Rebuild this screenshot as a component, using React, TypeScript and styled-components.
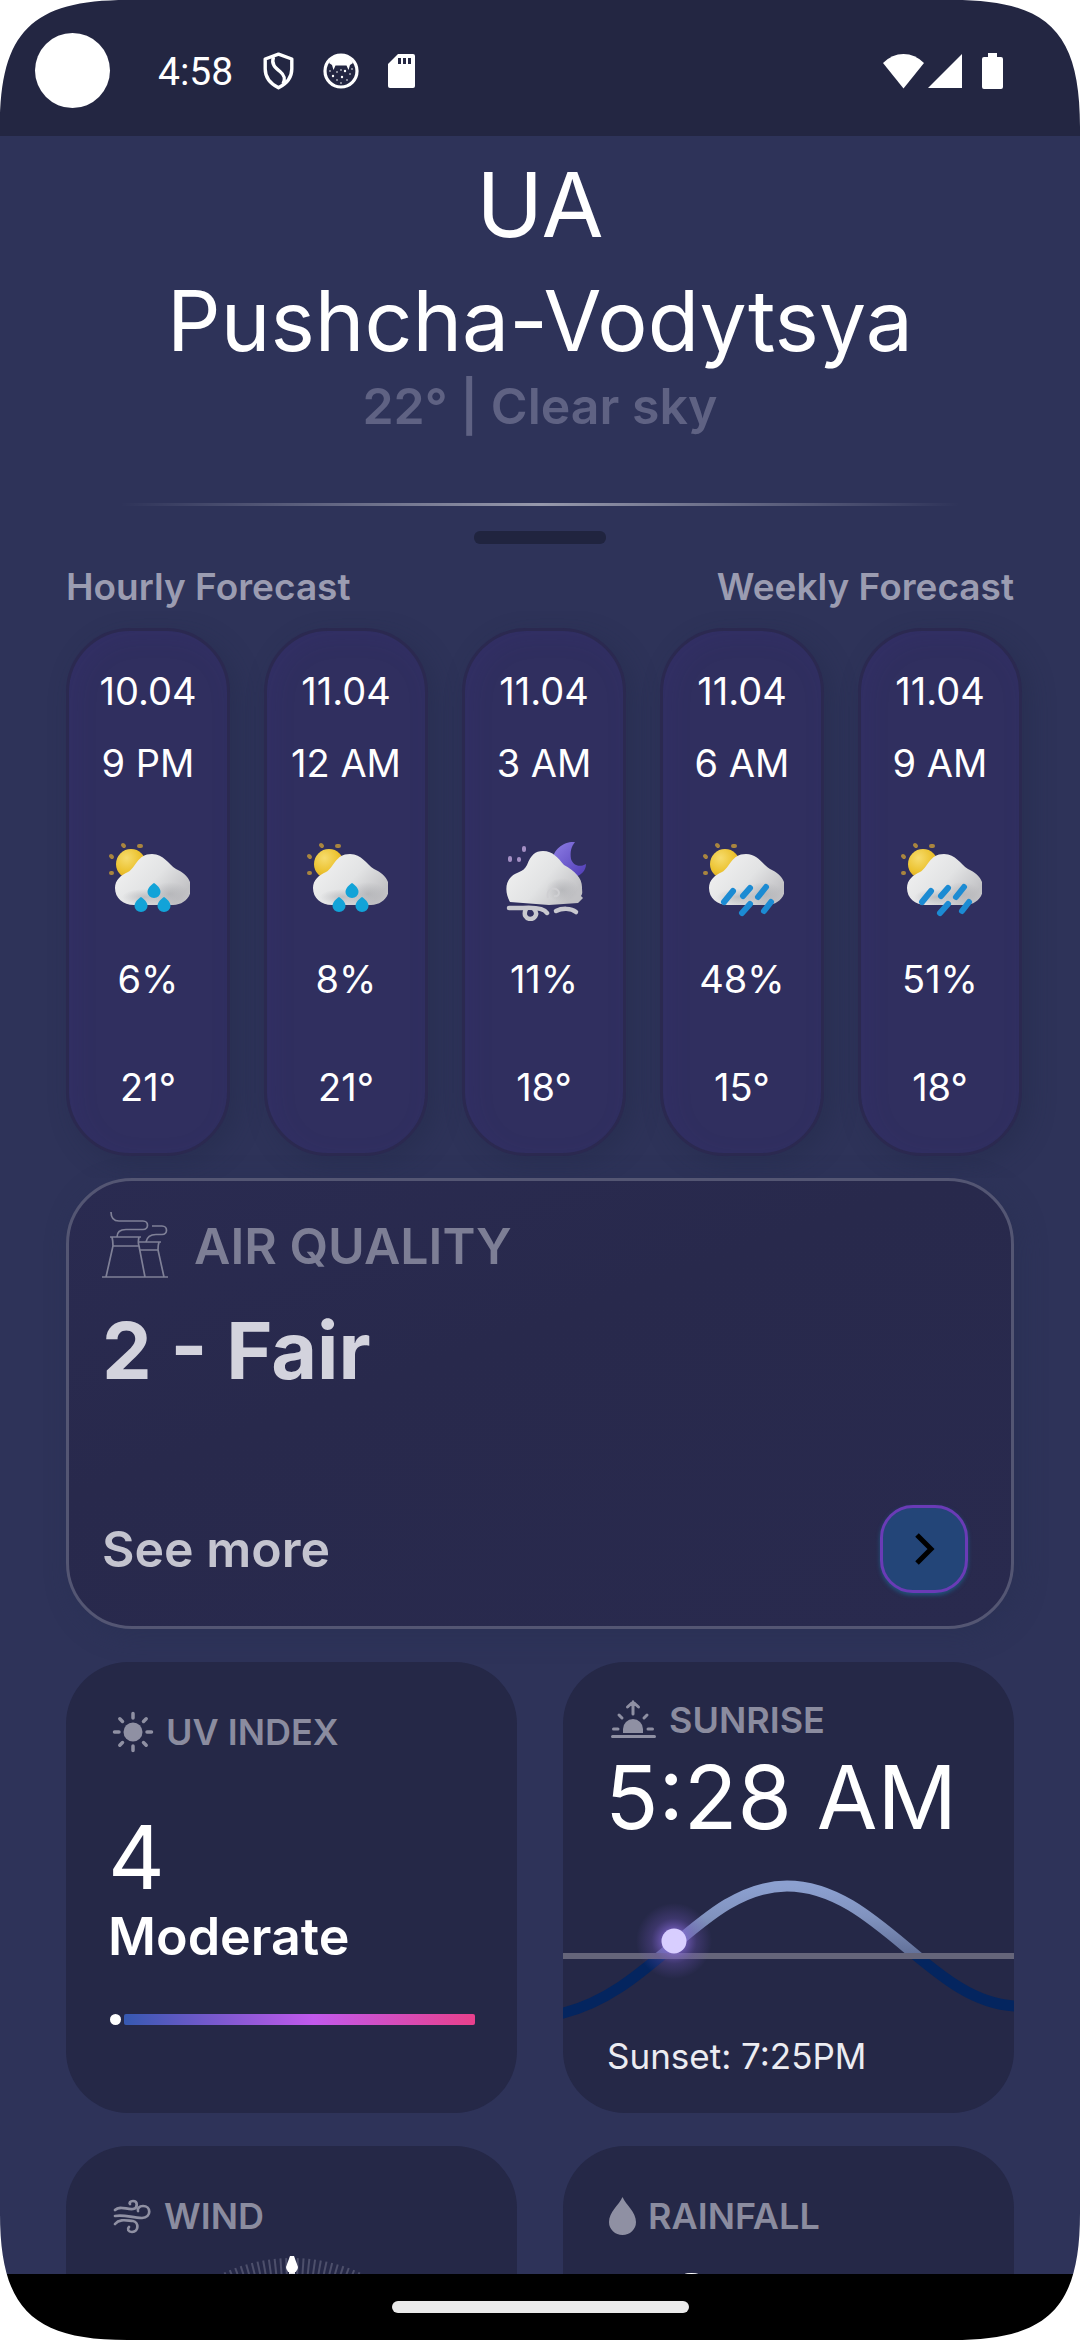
import React from "react";
import styled, { createGlobalStyle } from "styled-components";

const GlobalStyle = createGlobalStyle`
  *, *::before, *::after { box-sizing: border-box; }
  body { margin: 0; background: #fff; }
  button { font: inherit; }
`;

const Screen = styled.div`
  position: relative;
  display: flex;
  flex-direction: column;
  height: 100vh;
  overflow: hidden;
  background: #2e3359;
  color: #fff;
  font-family: Inter, "Liberation Sans", sans-serif;
`;

/* Rounded display corners */
const CornerShape = styled.svg<{ $turn: number; $v: string; $h: string }>`
  position: absolute;
  ${(p) => p.$v}: 0;
  ${(p) => p.$h}: 0;
  width: 127px;
  height: 127px;
  transform: rotate(${(p) => p.$turn}deg);
`;

/* Status bar */
const StatusBar = styled.header`
  display: flex;
  align-items: center;
  flex: none;
  height: 136px;
  padding: 5px 77px 0 35px;
  background: #232642;
`;
const Camera = styled.span`
  width: 75px;
  height: 75px;
  border-radius: 50%;
  background: #fff;
`;
const Clock = styled.time`
  margin: 0 30px 0 48px;
  padding-top: 2px;
  font: 400 39px/48px Roboto, sans-serif;
`;
const StatusIcons = styled.div<{ $gap: number }>`
  display: flex;
  align-items: center;
  gap: ${(p) => p.$gap}px;
`;
const SystemIcons = styled(StatusIcons)`
  margin-left: auto;
`;

/* Scrolling content */
const Content = styled.main`
  flex: 1;
  min-height: 0;
  overflow-y: auto;
  scrollbar-width: none;
  padding-top: 11px;
`;
const Place = styled.section`
  text-align: center;
`;
const Country = styled.p`
  margin: 0;
  font-size: 90px;
  line-height: 116px;
`;
const PlaceName = styled.h1`
  margin: 0;
  font-size: 84px;
  font-weight: 400;
  line-height: 116px;
`;
const PlaceSummary = styled.p`
  margin: 0;
  font-size: 50px;
  font-weight: 600;
  line-height: 54px;
  color: #5f6283;
`;
const Divider = styled.hr`
  height: 3px;
  margin: 70px 120px 25px;
  border: 0;
  background: linear-gradient(90deg, rgba(255, 255, 255, 0), rgba(255, 255, 255, 0.5), rgba(255, 255, 255, 0));
`;
const Handle = styled.div`
  width: 132px;
  height: 13px;
  margin: 0 auto 19px;
  border-radius: 6px;
  background: #20243f;
`;
const Tabs = styled.nav`
  display: flex;
  justify-content: space-between;
  padding: 0 66px;
`;
const Tab = styled.button`
  padding: 0;
  border: 0;
  background: none;
  color: #9b9cb1;
  font-size: 37px;
  font-weight: 600;
  line-height: 48px;
`;

const HourList = styled.ul`
  display: flex;
  gap: 34px;
  margin: 0;
  padding: 17px 66px 22px;
  list-style: none;
  overflow: hidden;
`;
const HourCard = styled.li`
  display: flex;
  flex: none;
  flex-direction: column;
  align-items: center;
  width: 164px;
  padding: 36px 0 42px;
  border: 3px solid #2b2950;
  border-radius: 64px;
  background: #302f5f;
  box-shadow: 8px 8px 24px rgba(32, 40, 70, 0.35), inset 6px 6px 24px rgba(72, 49, 157, 0.1);
`;
const HourText = styled.span<{ $after?: number }>`
  margin-bottom: ${(p) => p.$after ?? 0}px;
  font-size: 38px;
  line-height: 48px;
`;
const WeatherIcon = styled.svg`
  display: block;
  width: 84px;
  height: 84px;
  margin: 26px 0 34px;
`;

/* Air quality */
const Stack = styled.div`
  display: flex;
  flex-direction: column;
  gap: 33px;
  padding: 0 66px;
`;
const AirCard = styled.section`
  display: flex;
  flex-direction: column;
  min-height: 451px;
  padding: 32px 43px 33px 33px;
  border: 3px solid #545673;
  border-radius: 66px;
  background: linear-gradient(160deg, #2a2b51, #28294c 40%, #292a4e);
  box-shadow: 6px 6px 24px rgba(40, 48, 82, 0.5);
`;
const AirHead = styled.div`
  display: flex;
  align-items: center;
  gap: 26px;
  height: 65px;
`;
const AirTitle = styled.h2`
  margin: 0;
  font-size: 50px;
  font-weight: 600;
  line-height: 64px;
  color: #7d7e95;
`;
const AirValue = styled.p`
  margin: 26px 0 auto;
  font-size: 79px;
  font-weight: 700;
  line-height: 92px;
  color: #d3d3dd;
`;
const AirFoot = styled.div`
  display: flex;
  align-items: center;
  justify-content: space-between;
`;
const SeeMore = styled.span`
  font-size: 50px;
  font-weight: 600;
  line-height: 64px;
  color: #c4c4cf;
`;
const NextButton = styled.button`
  display: grid;
  place-items: center;
  width: 88px;
  height: 88px;
  padding: 0;
  border: 3px solid #6a3bb6;
  border-radius: 33px;
  background: #234578;
  box-shadow: 0 2px 4px rgba(28, 105, 150, 0.7);
`;

/* Metric tiles */
const Tiles = styled.div`
  display: grid;
  grid-template-columns: 1fr 1fr;
  gap: 33px 46px;
`;
const Tile = styled.section<{ $top?: number }>`
  aspect-ratio: 1;
  min-width: 0;
  overflow: hidden;
  padding-top: ${(p) => p.$top ?? 46}px;
  border-radius: 62px;
  background: #252847;
`;
const TileHead = styled.div<{ $gap: number }>`
  display: flex;
  align-items: center;
  gap: ${(p) => p.$gap}px;
  height: 48px;
  padding-left: 46px;
`;
const TileTitle = styled.h2`
  margin: 0;
  font-size: 36px;
  font-weight: 600;
  line-height: 48px;
  color: #8b8c9f;
`;
const TileValue = styled.p<{ $above: number }>`
  margin: ${(p) => p.$above}px 42px 0;
  font-size: 88px;
  line-height: 92px;
  white-space: nowrap;
`;
const TileLevel = styled.p`
  margin: 2px 42px 45px;
  font-size: 52px;
  font-weight: 600;
  line-height: 64px;
`;
const TileNote = styled.p`
  margin: 6px 44px 0;
  font-size: 35px;
  line-height: 40px;
  color: #ececf2;
`;
const UvScale = styled.div`
  display: grid;
  grid-template-columns: 11px 1fr;
  gap: 3px;
  margin: 0 42px 0 44px;
`;
const UvDot = styled.span`
  height: 11px;
  border-radius: 50%;
  background: #fff;
`;
const UvTrack = styled.span`
  height: 11px;
  border-radius: 2px;
  background: linear-gradient(90deg, #3659b1, #c159ec 54%, #e8408c);
`;
const SunChart = styled.svg`
  display: block;
  width: 100%;
  height: 160px;
  margin-top: 27px;
`;
const Compass = styled.svg`
  display: block;
  width: 340px;
  height: 340px;
  margin: 14px auto 0;
`;

/* Gesture bar */
const GestureBar = styled.footer`
  display: grid;
  flex: none;
  justify-content: center;
  align-content: start;
  height: 66px;
  padding-top: 27px;
  background: #000;
`;
const Pill = styled.span`
  width: 297px;
  height: 12px;
  border-radius: 6px;
  background: #eaeaea;
`;

const MUTED = "#8f90a3";

const Corner = (p: { turn: number; v: string; h: string }) => (
  <CornerShape $turn={p.turn} $v={p.v} $h={p.h} viewBox="0 0 127 127" aria-hidden="true">
    <path d="M0 0H127C32 0 0 32 0 127Z" fill="#fff" />
  </CornerShape>
);

const ShieldIcon = () => (
  <svg width="31" height="38" viewBox="0 0 31 38" fill="none" stroke="#fff" strokeWidth="3.4" strokeLinejoin="round">
    <path d="M15.5 2.2 28.800 7V17C28.800 26 23 32 15.5 35.8 8 32 2.2 26 2.2 17V7Z" />
    <path d="M10.500 5C8 12 12 15.500 17 19.500 22 23.500 22.500 27 20 32" />
  </svg>
);
const CatIcon = () => (
  <svg width="36" height="36" viewBox="0 0 36 36" fill="none">
    <circle cx="18" cy="18" r="16" stroke="#fff" strokeWidth="3.200" />
    <path d="M6 10C9 4 13 2 18 2S27 4 30 10L27 12 25.500 17 23.500 12.500H12.500L10.500 17 9 12Z" fill="#fff" />
    <g fill="#fff">
      <circle cx="10" cy="23" r="1.200" /><circle cx="14" cy="19" r=".8" /><circle cx="19" cy="24" r="1.200" />
      <circle cx="22" cy="18" r="1.200" /><circle cx="27" cy="21" r=".8" /><circle cx="14" cy="27" r=".8" />
      <circle cx="24" cy="27" r=".8" /><circle cx="18" cy="30" r=".8" /><circle cx="7" cy="18" r=".8" />
      <circle cx="29" cy="16" r=".8" /><circle cx="18" cy="17" r=".8" />
    </g>
  </svg>
);
const SdIcon = () => (
  <svg width="28" height="36" viewBox="0 0 28 36">
    <path d="M10 1H25a2 2 0 0 1 2 2V33a2 2 0 0 1-2 2H2a2 2 0 0 1-2-2V11Z" fill="#fff" />
    <path d="M10 5h3v6h-3zM15 5h3v6h-3zM20 5h3v6h-3z" fill="#232642" />
  </svg>
);
const WifiIcon = () => (
  <svg width="41" height="36" viewBox="0 0 41 36" fill="#fff">
    <path d="M0 10Q9 1 20.500 1T41 10L20.500 35.500Z" />
  </svg>
);
const SignalIcon = () => (
  <svg width="34" height="36" viewBox="0 0 34 36" fill="#fff">
    <path d="M34 1V35H0Z" />
  </svg>
);
const BatteryIcon = () => (
  <svg width="21" height="36" viewBox="0 0 21 36" fill="#fff">
    <path d="M6 0H15V4H19a2 2 0 0 1 2 2V34a2 2 0 0 1-2 2H2a2 2 0 0 1-2-2V6A2 2 0 0 1 2 4H6Z" />
  </svg>
);

type Sky = "drops" | "night" | "rain";

const DefsHolder = styled.svg`
  position: absolute;
  width: 0;
  height: 0;
`;
const SkyDefs = () => (
  <DefsHolder aria-hidden="true">
    <defs>
      <linearGradient id="cloud" x1="0" y1="0" x2="1" y2="0.600">
        <stop offset="0" stopColor="#f4f4f4" />
        <stop offset="0.600" stopColor="#e2e3e4" />
        <stop offset="1" stopColor="#c2c2c5" />
      </linearGradient>
      <radialGradient id="sun" cx="0.350" cy="0.300" r="0.750">
        <stop offset="0" stopColor="#f6dc6e" />
        <stop offset="0.600" stopColor="#ecc331" />
        <stop offset="1" stopColor="#d9a21f" />
      </radialGradient>
      <linearGradient id="moon" x1="0" y1="0" x2="1" y2="1">
        <stop offset="0" stopColor="#8f7fe6" />
        <stop offset="1" stopColor="#4f3bb5" />
      </linearGradient>
      <radialGradient id="shade">
        <stop offset="0" stopColor="#a9aaae" stopOpacity="0.600" />
        <stop offset="1" stopColor="#a9aaae" stopOpacity="0" />
      </radialGradient>
    </defs>
  </DefsHolder>
);

const SunRays = () => (
  <path d="M17 8 18 9M33 9H35M5 19 6 20M5 36H6" stroke="#a9853f" strokeWidth="4" strokeLinecap="round" />
);
const Cloud = () => (
  <path
    d="M28 68C17 68 9 61 9 51 9 43 15 38 22 35 30 31 31 17 46 17 58 17 62 27 70 32 79 36 85 42 85 51 85 61 77 68 67 68Z"
    fill="url(#cloud)"
  />
);

const SkyIcon = ({ sky }: { sky: Sky }) => {
  if (sky === "night") {
    return (
      <WeatherIcon viewBox="0 0 84 84" role="img" aria-label="Cloudy night with wind">
        <path d="M73 5C63 4 51 11 50 25 52 35 62 42 73 40 80 38 84 33 84 27 77 31 71 28 69 22 68 15 69 10 73 5Z" fill="url(#moon)" />
        <path d="M22 11v2M8 21v2M17 22v1" stroke="#a48fc4" strokeWidth="4" strokeLinecap="round" />
        <path d="M8 65C3 56 3 46 9 40 15 34 21 36 25 28 29 18 33 14 41 14 51 14 56 21 62 28 73 34 80 41 80 50 80 55 81 56 79 59L81 61 76 66 47 68 34 67Z" fill="url(#cloud)" />
        <ellipse cx="60" cy="53" rx="16" ry="12" fill="url(#shade)" />
        <path d="M46 61C44 54 49 50 54 52 59 55 57 60 52 59" fill="none" stroke="#cfcfd2" strokeWidth="2" />
        <g fill="none" stroke="#c9c9cf" strokeWidth="4.500" strokeLinecap="round">
          <path d="M7 71H21C38 70 43 73 45 76" />
          <path d="M24 72C21 78 24 82 29 82 34 81 36 76 32 72" />
          <path d="M54 74C60 71 69 71 74 75" />
        </g>
      </WeatherIcon>
    );
  }
  return (
    <WeatherIcon viewBox="0 0 84 84" role="img" aria-label={sky === "drops" ? "Light rain" : "Rain"}>
      <SunRays />
      <circle cx="25" cy="27" r="15" fill="url(#sun)" />
      <Cloud />
      <ellipse cx="64" cy="57" rx="19" ry="12" fill="url(#shade)" />
      <ellipse cx="38" cy="60" rx="22" ry="8" fill="url(#shade)" />
      {sky === "drops" ? (
        <g fill="#12a3d8">
          <path d="M48 46C51 48 54.500 51 54.500 55A6.500 6 0 0 1 41.500 55C41.500 51 45 48 48 46Z" />
          <path d="M35 60C38 62 41.500 65 41.500 69A6.500 6 0 0 1 28.500 69C28.500 65 32 62 35 60Z" />
          <path d="M58 60C61 62 64.500 65 64.500 69A6.500 6 0 0 1 51.500 69C51.500 65 55 62 58 60Z" />
        </g>
      ) : (
        <path
          d="M33 54 24 65M50 51 43 59M66 50 58 60M50 67 42 76M71 65 64 74"
          stroke="#1c8bd3" strokeWidth="6" strokeLinecap="round"
        />
      )}
    </WeatherIcon>
  );
};

const TowersIcon = () => (
  <svg width="66" height="67" viewBox="0 0 66 67" fill="none" stroke="#7f8097" strokeWidth="1.700">
    <path d="M0 65H66M8 25H39M11 34H37M10 25C11 29 11 31 11 34L4 65M37 25C36 29 36 31 37 34L43 65" />
    <path d="M36 30H59M37 38H56M57 30C56 33 56 36 56 38L62 65" />
    <path d="M9 0C9 6 12 9 17 9H41C47 9 47 17.500 41 17.500H24C18 17.500 15 20 15 25" />
    <path d="M50 14H60C66 14 66 22.500 60 22.500H54C48 22.500 45 25 44 30" />
  </svg>
);
const ChevronIcon = () => (
  <svg width="24" height="36" viewBox="0 0 24 36" fill="none" stroke="#000" strokeWidth="5">
    <path d="M5 4 19 18 5 32" />
  </svg>
);
const UvIcon = () => (
  <svg width="42" height="42" viewBox="0 0 42 42" stroke={MUTED} strokeWidth="3.500" strokeLinecap="round">
    <circle cx="21" cy="21" r="9.500" fill={MUTED} stroke="none" />
    <path d="M21 2.500V7M21 35V39.500M2.500 21H7M35 21H39.500M7.800 7.800 10.500 10.500M31.500 31.500 34.200 34.200M7.800 34.200 10.500 31.500M31.500 10.500 34.200 7.800" />
  </svg>
);
const SunriseIcon = () => (
  <svg width="48" height="42" viewBox="0 0 48 42" fill="none" stroke={MUTED} strokeWidth="3" strokeLinecap="round">
    <path d="M14 34V30A10 10 0 0 1 34 30V34Z" fill={MUTED} stroke="none" />
    <path d="M3.500 37.500H45.500M4.500 30H9M39 30H43.500M10 16 13 19M38 16 35 19M24 15V3M18.500 8 24 3 29.500 8" />
  </svg>
);
const WindIcon = () => (
  <svg width="40" height="36" viewBox="0 0 40 36" fill="none" stroke={MUTED} strokeWidth="2.700" strokeLinecap="round">
    <path d="M3 12C8 7 15 12 21 11 26 10 26 3 21 3 18 3 17 5 18 6" />
    <path d="M3 18C12 16 20 20 30 20 40 19 39 8 31 8 27 8 25 11 26 13" />
    <path d="M3 26C8 20 16 23 21 23 27 24 27 34 20 34 16 34 15 31 17 29" />
  </svg>
);
const DropIcon = () => (
  <svg width="27" height="38" viewBox="0 0 27 38">
    <path d="M13.500 0C17 8 27 15 27 25A13.500 13 0 0 1 0 25C0 15 10 8 13.500 0Z" fill={MUTED} />
  </svg>
);

const SunPath = () => (
  <SunChart viewBox="0 208 451 160" preserveAspectRatio="none" role="img" aria-label="Sun position">
    <defs>
      <linearGradient id="day" x1="0" y1="224" x2="0" y2="300" gradientUnits="userSpaceOnUse">
        <stop offset="0" stopColor="#8ca0d0" />
        <stop offset="0.400" stopColor="#8193bf" />
        <stop offset="1" stopColor="#5c6a92" />
      </linearGradient>
      <radialGradient id="glow">
        <stop offset="0.300" stopColor="#8669d8" stopOpacity="0.700" />
        <stop offset="0.600" stopColor="#7257bd" stopOpacity="0.300" />
        <stop offset="1" stopColor="#7257bd" stopOpacity="0" />
      </radialGradient>
      <clipPath id="above"><rect x="0" y="200" width="451" height="94" /></clipPath>
      <clipPath id="below"><rect x="0" y="294" width="451" height="90" /></clipPath>
    </defs>
    <g fill="none" strokeWidth="11">
      <path clipPath="url(#below)" stroke="#04255f" d="M-4 352C90 332 140 224 224 224 315 224 370 344 455 344" />
      <path clipPath="url(#above)" stroke="url(#day)" d="M-4 352C90 332 140 224 224 224 315 224 370 344 455 344" />
    </g>
    <path d="M0 294H451" stroke="#65657a" strokeWidth="6" />
    <circle cx="111" cy="279" r="38" fill="url(#glow)" />
    <circle cx="111" cy="279" r="12.500" fill="#d8ceff" />
  </SunChart>
);

const WindCompass = () => (
  <Compass viewBox="0 0 340 340" role="img" aria-label="Wind direction">
    <g stroke="#4d4f6b" strokeWidth="2">
      {Array.from({ length: 180 }, (_, i) => (
        <path key={i} d="M170 4V24" transform={`rotate(${i * 2} 170 170)`} />
      ))}
    </g>
    <path d="M170 12V320" stroke="#e4e4ea" strokeWidth="6" />
    <path d="M168 2H172L176 13A6 6 0 0 1 164 13Z" fill="#fff" />
  </Compass>
);

const hours: { date: string; time: string; sky: Sky; chance: string; temp: string }[] = [
  { date: "10.04", time: "9 PM", sky: "drops", chance: "6%", temp: "21°" },
  { date: "11.04", time: "12 AM", sky: "drops", chance: "8%", temp: "21°" },
  { date: "11.04", time: "3 AM", sky: "night", chance: "11%", temp: "18°" },
  { date: "11.04", time: "6 AM", sky: "rain", chance: "48%", temp: "15°" },
  { date: "11.04", time: "9 AM", sky: "rain", chance: "51%", temp: "18°" },
];

export default function App() {
  return (
    <Screen>
      <GlobalStyle />
      <SkyDefs />
      <StatusBar>
        <Camera />
        <Clock>4:58</Clock>
        <StatusIcons $gap={29}>
          <ShieldIcon />
          <CatIcon />
          <SdIcon />
        </StatusIcons>
        <SystemIcons $gap={20}>
          <StatusIcons $gap={4}>
            <WifiIcon />
            <SignalIcon />
          </StatusIcons>
          <BatteryIcon />
        </SystemIcons>
      </StatusBar>

      <Content>
        <Place>
          <Country>UA</Country>
          <PlaceName>Pushcha-Vodytsya</PlaceName>
          <PlaceSummary>22° | Clear sky</PlaceSummary>
        </Place>
        <Divider />
        <Handle />
        <Tabs>
          <Tab type="button">Hourly Forecast</Tab>
          <Tab type="button">Weekly Forecast</Tab>
        </Tabs>
        <HourList>
          {hours.map((h) => (
            <HourCard key={h.date + h.time}>
              <HourText $after={24}>{h.date}</HourText>
              <HourText $after={24}>{h.time}</HourText>
              <SkyIcon sky={h.sky} />
              <HourText $after={60}>{h.chance}</HourText>
              <HourText>{h.temp}</HourText>
            </HourCard>
          ))}
        </HourList>

        <Stack>
          <AirCard>
            <AirHead>
              <TowersIcon />
              <AirTitle>AIR QUALITY</AirTitle>
            </AirHead>
            <AirValue>2 - Fair</AirValue>
            <AirFoot>
              <SeeMore>See more</SeeMore>
              <NextButton type="button" aria-label="See more">
                <ChevronIcon />
              </NextButton>
            </AirFoot>
          </AirCard>

          <Tiles>
            <Tile>
              <TileHead $gap={12}>
                <UvIcon />
                <TileTitle>UV INDEX</TileTitle>
              </TileHead>
              <TileValue $above={55}>4</TileValue>
              <TileLevel>Moderate</TileLevel>
              <UvScale>
                <UvDot />
                <UvTrack />
              </UvScale>
            </Tile>
            <Tile $top={34}>
              <TileHead $gap={12}>
                <SunriseIcon />
                <TileTitle>SUNRISE</TileTitle>
              </TileHead>
              <TileValue $above={7}>5:28 AM</TileValue>
              <SunPath />
              <TileNote>Sunset: 7:25PM</TileNote>
            </Tile>
            <Tile>
              <TileHead $gap={12}>
                <WindIcon />
                <TileTitle>WIND</TileTitle>
              </TileHead>
              <WindCompass />
            </Tile>
            <Tile>
              <TileHead $gap={12}>
                <DropIcon />
                <TileTitle>RAINFALL</TileTitle>
              </TileHead>
              <TileValue $above={20}>1.8 mm</TileValue>
            </Tile>
          </Tiles>
        </Stack>
      </Content>

      <GestureBar>
        <Pill />
      </GestureBar>

      <Corner turn={0} v="top" h="left" />
      <Corner turn={90} v="top" h="right" />
      <Corner turn={270} v="bottom" h="left" />
      <Corner turn={180} v="bottom" h="right" />
    </Screen>
  );
}
